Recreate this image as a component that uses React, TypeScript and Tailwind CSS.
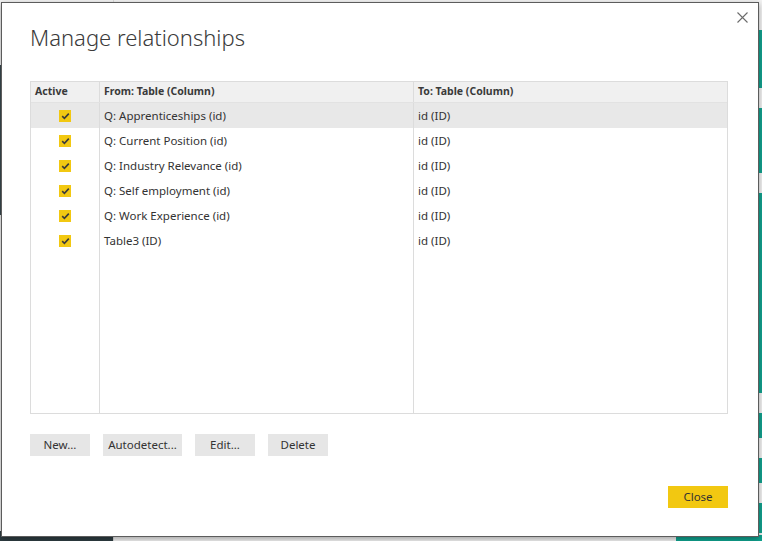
const ROWS = [
  { from: 'Q: Apprenticeships (id)', to: 'id (ID)', selected: true },
  { from: 'Q: Current Position (id)', to: 'id (ID)' },
  { from: 'Q: Industry Relevance (id)', to: 'id (ID)' },
  { from: 'Q: Self employment (id)', to: 'id (ID)' },
  { from: 'Q: Work Experience (id)', to: 'id (ID)' },
  { from: 'Table3 (ID)', to: 'id (ID)' },
]

const FONT = { fontFamily: '"Segoe UI", "Noto Sans", "Open Sans", sans-serif' }

function Check() {
  return (
    <span className="flex h-[12px] w-[12px] items-center justify-center bg-[#f2c811]">
      <svg width="9" height="8" viewBox="0 0 9 8" fill="none">
        <path d="M1.2 4.2 3.4 6.3 7.8 1.6" stroke="#3a3a3a" strokeWidth="1.6" />
      </svg>
    </span>
  )
}

function Button({ label, w, primary }: { label: string; w: string; primary?: boolean }) {
  return (
    <button
      className={`flex h-[22px] ${w} items-center justify-center text-[11.5px] text-[#333] ${primary ? 'bg-[#f2c811]' : 'bg-[#e6e6e6]'}`}
    >
      {label}
    </button>
  )
}

function Dialog() {
  return (
    <div
      className="absolute left-[1px] top-[2px] flex h-[535px] w-[758px] flex-col border border-[#5c5c5c] bg-white pl-[28px] pr-[30px] pt-[19px] shadow-[0_2px_6px_rgba(0,0,0,0.35)]"
      style={FONT}
    >
      <button className="absolute right-[9px] top-[8px] flex h-[13px] w-[13px] items-center justify-center">
        <svg width="11" height="11" viewBox="0 0 11 11" stroke="#6b6b6b" strokeWidth="1.1">
          <path d="M0.5 0.5 10.5 10.5M10.5 0.5 0.5 10.5" />
        </svg>
      </button>
      <h1 className="h-[30px] text-[22px] font-light leading-[30px] text-[#3b3b3b]">Manage relationships</h1>

      <div className="mt-[29px] flex h-[333px] flex-col border border-[#dcdcdc] text-[11.5px] text-[#333]">
        <div className="flex h-[21px] shrink-0 border-b border-[#e2e2e2] bg-[#f0f0f0] text-[10.5px] font-bold text-[#3a3a3a]">
          <div className="flex w-[69px] items-center border-r border-[#dcdcdc] pl-[4px]">Active</div>
          <div className="flex w-[314px] items-center border-r border-[#dcdcdc] pl-[4px]">From: Table (Column)</div>
          <div className="flex flex-1 items-center pl-[4px]">To: Table (Column)</div>
        </div>
        <div className="flex flex-1">
          <div className="flex w-[69px] flex-col border-r border-[#dcdcdc]">
            {ROWS.map((r) => (
              <div key={r.from} className={`flex h-[25px] items-center justify-center ${r.selected ? 'bg-[#e8e8e8]' : ''}`}>
                <Check />
              </div>
            ))}
          </div>
          <div className="flex w-[314px] flex-col border-r border-[#dcdcdc]">
            {ROWS.map((r) => (
              <div key={r.from} className={`flex h-[25px] items-center pl-[4px] ${r.selected ? 'bg-[#e8e8e8]' : ''}`}>
                {r.from}
              </div>
            ))}
          </div>
          <div className="flex flex-1 flex-col">
            {ROWS.map((r) => (
              <div key={r.from} className={`flex h-[25px] items-center pl-[4px] ${r.selected ? 'bg-[#e8e8e8]' : ''}`}>
                {r.to}
              </div>
            ))}
          </div>
        </div>
      </div>

      <div className="mt-[20px] flex gap-[13px]">
        <Button label="New..." w="w-[60px]" />
        <Button label="Autodetect..." w="w-[79px]" />
        <Button label="Edit..." w="w-[60px]" />
        <Button label="Delete" w="w-[60px]" />
      </div>

      <div className="mt-[30px] flex justify-end">
        <Button label="Close" w="w-[60px]" primary />
      </div>
    </div>
  )
}

export default function App() {
  return (
    <div className="relative h-[541px] w-[762px] overflow-hidden bg-[#f3f3f3]">
      <div className="flex h-full">
        <div className="flex w-[113px] flex-col">
          <div className="h-[65px] bg-[#f3f3f3]" />
          <div className="h-[150px] bg-[#3a4a50]" />
          <div className="flex-1 bg-[#f3f3f3]" />
          <div className="h-[10px] bg-[#2f3d42]" />
        </div>
        <div className="flex-1 border-l border-[#dadada]" />
        <div className="flex w-[86px] flex-col justify-end">
          <div className="h-[6px] bg-[#0fa38f]" />
        </div>
      </div>
      <div className="absolute right-0 top-[30px] flex h-[505px] w-[4px] flex-col gap-[20px]">
        <div className="h-[58px] bg-[#12a28f]" />
        <div className="h-[65px] bg-[#12a28f]" />
        <div className="h-[200px] bg-[#12a28f]" />
        <div className="h-[25px] bg-[#12a28f]" />
        <div className="h-[25px] bg-[#12a28f]" />
        <div className="h-[30px] bg-[#12a28f]" />
      </div>
      <Dialog />
    </div>
  )
}
